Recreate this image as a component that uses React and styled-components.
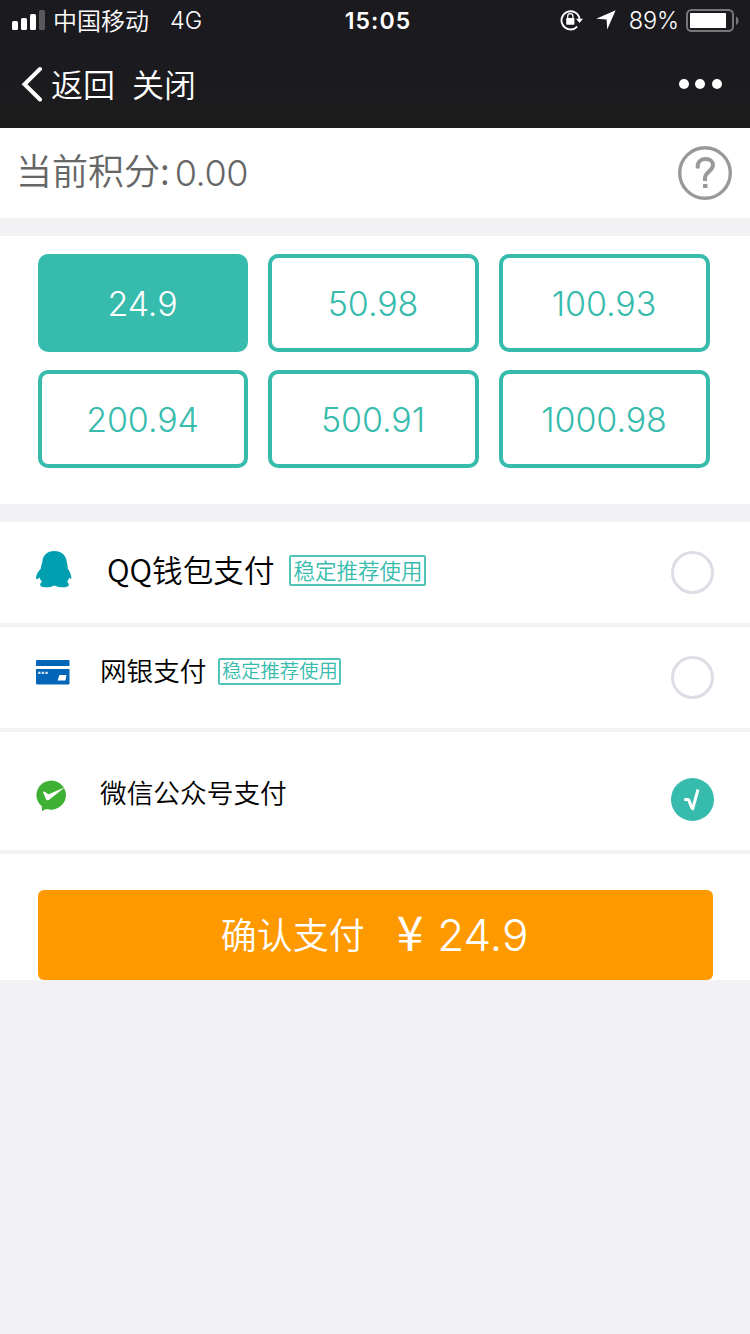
import React, { useState } from "react";
import styled, { createGlobalStyle } from "styled-components";

const amounts = ["24.9", "50.98", "100.93", "200.94", "500.91", "1000.98"];

const App = () => {
  const [amount, setAmount] = useState("24.9");
  const [method, setMethod] = useState("wechat");

  return (
    <Container>
      <GlobalStyle />
      <StatusBar>
        <StatusLeft>
          <Signal />
          <Carrier>中国移动</Carrier>
          <Network>4G</Network>
        </StatusLeft>
        <Time>15:05</Time>
        <StatusRight>
          <LockIcon />
          <LocationIcon />
          <Percent>89%</Percent>
          <BatteryIcon />
        </StatusRight>
      </StatusBar>
      <NavBar>
        <NavLeft>
          <BackIcon />
          <NavText>返回</NavText>
          <NavText>关闭</NavText>
        </NavLeft>
        <MoreIcon />
      </NavBar>

      <Credits>
        <CreditsLabel>当前积分:</CreditsLabel>
        <CreditsValue>0.00</CreditsValue>
        <HelpIcon />
      </Credits>

      <Amounts>
        {amounts.map((item) => (
          <Amount key={item} $active={item === amount} onClick={() => setAmount(item)}>
            {item}
          </Amount>
        ))}
      </Amounts>

      <Methods>
        <Method onClick={() => setMethod("qq")}>
          <IconBox $top={29}><QQIcon /></IconBox>
          <MethodName $left={35} $top={23} $size={30.6}>QQ钱包支付</MethodName>
          <Tag $left={15} $top={33} $width={137} $height={31} $size={21.5}>稳定推荐使用</Tag>
          <Radio $top={29} $checked={method === "qq"}>{method === "qq" && <CheckIcon />}</Radio>
        </Method>
        <Method onClick={() => setMethod("bank")}>
          <IconBox $top={33}><BankIcon /></IconBox>
          <MethodName $left={28} $top={19} $size={26.6}>网银支付</MethodName>
          <Tag $left={12} $top={31} $width={123} $height={27} $size={19.3}>稳定推荐使用</Tag>
          <Radio $top={29} $checked={method === "bank"}>{method === "bank" && <CheckIcon />}</Radio>
        </Method>
        <Method $tall onClick={() => setMethod("wechat")}>
          <IconBox $top={48}><WechatIcon /></IconBox>
          <MethodName $left={28} $top={36} $size={26.7}>微信公众号支付</MethodName>
          <Radio $top={46} $checked={method === "wechat"}>{method === "wechat" && <CheckIcon />}</Radio>
        </Method>
      </Methods>

      <Footer>
        <PayButton>
          <PayLabel>确认支付</PayLabel>
          <Yen>¥</Yen>
          <PayAmount>{amount}</PayAmount>
        </PayButton>
      </Footer>
    </Container>
  );
};

const Signal = () => (
  <svg width="33" height="20" viewBox="0 0 33 20" fill="#fff">
    <rect x="0" y="11" width="6" height="9" rx="1.5" />
    <rect x="9" y="8" width="6" height="12" rx="1.5" />
    <rect x="18" y="4" width="6" height="16" rx="1.5" />
    <rect x="27" y="0" width="6" height="20" rx="1.5" fill="#59595c" />
  </svg>
);

const LockIcon = () => (
  <svg width="24" height="22" viewBox="0 0 24 22" fill="none">
    <path d="M17.2 17.6A9.1 9.1 0 1 1 19.6 10" stroke="#fff" strokeWidth="1.9" />
    <path d="M16 9.8h7l-3.5 4.2z" fill="#fff" />
    <rect x="6.2" y="9" width="8.2" height="6.8" rx="0.8" fill="#fff" />
    <path d="M7.7 9.5V7.2a2.6 2.6 0 0 1 5.2 0v2.3" stroke="#fff" strokeWidth="1.3" />
  </svg>
);

const LocationIcon = () => (
  <svg width="20" height="20" viewBox="0 0 20 20">
    <path d="M19.6 0.3L11.2 19.6L10.6 9.4L0.3 8.7z" fill="#fff" />
  </svg>
);

const BatteryIcon = () => (
  <svg width="53" height="24" viewBox="0 0 53 24">
    <rect x="1" y="2" width="46" height="21" rx="4.5" fill="none" stroke="#77777a" strokeWidth="2" />
    <rect x="4" y="5" width="36" height="15" rx="0.6" fill="#fff" />
    <path d="M50 8.5c3.4 1.2 3.4 7.3 0 8.5z" fill="#77777a" />
  </svg>
);

const BackIcon = () => (
  <svg width="22" height="36" viewBox="0 0 22 36" fill="none">
    <path d="M19 3L3.5 18.2L19 33.5" stroke="#fff" strokeWidth="4" strokeLinecap="round" />
  </svg>
);

const MoreIcon = () => (
  <svg width="44" height="12" viewBox="0 0 44 12" fill="#fff">
    <circle cx="5" cy="6" r="5" />
    <circle cx="21" cy="6" r="5" />
    <circle cx="38" cy="6" r="5" />
  </svg>
);

const HelpIcon = () => (
  <svg width="54" height="54" viewBox="0 0 54 54" fill="none" stroke="#999">
    <circle cx="27" cy="27" r="25.3" strokeWidth="3.4" />
    <path d="M19.7 22.5V20.5C19.7 15.5 23 13 27.6 13C32.2 13 35 15.7 35 19C35 25 27 26 27 32V35" strokeWidth="4" />
    <rect x="25" y="38" width="4.5" height="4" fill="#999" stroke="none" />
  </svg>
);

const QQIcon = () => (
  <svg width="36" height="37" viewBox="0 0 36 37">
    <path
      d="M18.3 0C11.2 0 6.6 4.500 6.3 11C6.1 13 4.800 14.500 4.900 17.500C2.200 20.200 0 23.500 0 27C0.100 28.600 1 28.600 2 27.700L3.600 26.500C4.200 28.500 4.900 29.800 6 31C4.100 31.800 3.700 33.500 4.600 34.900C6 36.600 14 36.700 16.500 35.200C17.800 34.600 19.200 34.600 20.500 35.200C23 36.700 31 36.600 32.400 34.900C33.300 33.500 32.900 31.800 31 31C32.100 29.800 32.600 28.500 33 26.500L34 27.500C34.900 28.400 35.400 27.800 35.300 26.300C35 22.800 33.300 19.800 31.700 17.500C32 14.500 31 13 30.800 11C30.400 4.500 25.400 0 18.300 0Z"
      fill="#029fb1"
    />
  </svg>
);

const BankIcon = () => (
  <svg width="34" height="26" viewBox="0 0 34 26" fill="#0266b8">
    <path d="M1.5 0H32.5Q33.5 0 33.5 1V6H0V1Q0 0 1.5 0Z" />
    <path d="M0 9H33.5V23.5Q33.5 24.5 32.5 24.5H1.5Q0 24.5 0 23.5Z" />
    <path d="M23.5 15H30.500L29.500 20.500H21.500Z" fill="#fff" />
    <path d="M2.2 11.8h2.3v2.2h-2.3zM5.8 11.8h2.3v2.2h-2.3zM9.4 11.8h2.3v2.2h-2.3z" fill="#dcebf6" />
  </svg>
);

const WechatIcon = () => (
  <svg width="32" height="32" viewBox="0 0 32 32">
    <path d="M15.5 0.5A15 14.6 0 1 1 11.5 29.3Q8.5 29 6 31.2L5.8 26.3A15 14.6 0 0 1 15.5 0.5Z" fill="#3eb135" />
    <path d="M7 12.2Q7.500 10.900 8.700 11.700L12.600 14.300L29 7.200L12.800 19.900Q11.200 21 10.200 19.400Z" fill="#fff" />
  </svg>
);

const CheckIcon = () => (
  <svg width="43" height="43" viewBox="0 0 43 43" fill="none" stroke="#fff" strokeLinejoin="bevel">
    <path d="M13.3 21.500H17.500L21.200 30.500" strokeWidth="3.200" />
    <path d="M21.300 32L27 11.500" strokeWidth="3" />
  </svg>
);

const GlobalStyle = createGlobalStyle`
  * {
    box-sizing: border-box;
  }
  body {
    margin: 0;
    background: #f2f2f5;
    font-family: Inter, "Noto Sans CJK SC", sans-serif;
  }
`;

const Container = styled.div`
  width: 750px;
  min-height: 1334px;
  background: #f2f2f5;
`;

const StatusBar = styled.div`
  height: 40px;
  display: grid;
  grid-template-columns: 1fr auto 1fr;
  align-items: center;
  padding: 0 11px 0 12px;
  background: #1b1a1f;
  color: #fff;
  font-size: 24px;
  line-height: 38px;
`;

const StatusLeft = styled.div`
  display: flex;
  align-items: center;
`;

const StatusRight = styled.div`
  display: flex;
  align-items: center;
  justify-content: flex-end;

  > svg:nth-child(2) {
    margin-left: 12px;
  }
`;

const Carrier = styled.span`
  margin-left: 8px;
  font-family: "Noto Sans CJK SC", sans-serif;
  font-weight: 350;
`;

const Network = styled.span`
  margin-left: 21px;
  padding-top: 2px;
  font-size: 23.5px;
  font-weight: 350;
`;

const Time = styled.span`
  padding: 2px 0 0 5px;
  font-weight: 600;
  font-size: 23px;
  letter-spacing: 1.1px;
`;

const Percent = styled.span`
  margin: 0 7px 0 13px;
  padding-top: 2px;
  font-size: 23.5px;
  font-weight: 350;
  letter-spacing: -0.1px;
`;

const NavBar = styled.div`
  height: 88px;
  display: flex;
  align-items: center;
  justify-content: space-between;
  padding: 0 27px 0 21px;
  background: linear-gradient(#1b1a1f, #1c1c1d);
  color: #fff;
`;

const NavLeft = styled.div`
  display: flex;
  align-items: center;
`;

const NavText = styled.span`
  margin-left: 8px;
  padding-bottom: 2px;
  font-family: "Noto Sans CJK SC", sans-serif;
  font-size: 32px;
  line-height: 44px;
  font-weight: 350;

  & + & {
    margin-left: 17px;
  }
`;

const Credits = styled.div`
  height: 90px;
  display: flex;
  align-items: center;
  padding: 0 18px 0 16px;
  background: #fff;
  color: #666;

  > svg {
    margin-left: auto;
  }
`;

const CreditsLabel = styled.span`
  padding-bottom: 8px;
  font-family: "Noto Sans CJK SC", sans-serif;
  font-size: 36px;
  line-height: 50px;
  font-weight: 350;
`;

const CreditsValue = styled.span`
  margin-left: 5px;
  font-size: 36px;
  font-weight: 300;
  letter-spacing: -0.4px;
`;

const Amounts = styled.div`
  height: 268px;
  margin-top: 18px;
  padding: 18px 40px 36px 38px;
  display: grid;
  grid-template-columns: 210px 211px 211px;
  grid-auto-rows: 98px;
  gap: 18px 20px;
  background: #fff;
`;

const Amount = styled.button`
  border: 4px solid #36bbad;
  border-radius: 10px;
  background: ${({ $active }) => ($active ? "#36bbad" : "#fff")};
  color: ${({ $active }) => ($active ? "#fff" : "#36bbad")};
  font-family: Inter, sans-serif;
  font-size: 34px;
  font-weight: 300;
  letter-spacing: -0.1px;
  padding: 1px 1px 0 0;
`;

const Methods = styled.div`
  margin-top: 18px;
`;

const Method = styled.div`
  height: ${({ $tall }) => ($tall ? "122px" : "105px")};
  display: flex;
  align-items: flex-start;
  padding: 0 36px;
  background: #fff;
  border-bottom: 4px solid #f2f2f5;
`;

const IconBox = styled.div`
  width: 36px;
  flex-shrink: 0;
  margin-top: ${({ $top }) => $top}px;

  > svg {
    display: block;
  }
`;

const MethodName = styled.span`
  margin: ${({ $top }) => $top}px 0 0 ${({ $left }) => $left}px;
  font-family: "Noto Sans CJK SC", sans-serif;
  font-size: ${({ $size }) => $size}px;
  line-height: 48px;
  font-weight: 350;
  color: #000;
  white-space: nowrap;
`;

const Tag = styled.span`
  width: ${({ $width }) => $width}px;
  height: ${({ $height }) => $height}px;
  margin: ${({ $top }) => $top}px 0 0 ${({ $left }) => $left}px;
  padding-bottom: 1px;
  display: flex;
  align-items: center;
  justify-content: center;
  border: 2px solid #4fc4b7;
  border-radius: 2px;
  color: #36bbad;
  font-family: "Noto Sans CJK SC", sans-serif;
  font-size: ${({ $size }) => $size}px;
  font-weight: 350;
  line-height: 1;
  white-space: nowrap;
`;

const Radio = styled.div`
  width: 43px;
  height: 43px;
  flex-shrink: 0;
  margin: ${({ $top }) => $top}px 0 0 auto;
  border-radius: 50%;
  border: ${({ $checked }) => ($checked ? "none" : "3px solid #dddde5")};
  background: ${({ $checked }) => ($checked ? "#36bbad" : "#fff")};
`;

const Footer = styled.div`
  height: 126px;
  padding: 36px 37px 0 38px;
  background: #fff;
`;

const PayButton = styled.button`
  width: 100%;
  height: 90px;
  display: flex;
  align-items: center;
  justify-content: center;
  border: none;
  border-radius: 6px;
  padding: 0 2px 0 0;
  background: #ff9900;
  color: #fff;
`;

const PayLabel = styled.span`
  padding-bottom: 4px;
  font-family: "Noto Sans CJK SC", sans-serif;
  font-size: 36px;
  line-height: 50px;
  font-weight: 350;
`;

const Yen = styled.span`
  margin-left: 32px;
  padding-bottom: 10px;
  font-family: "Noto Sans CJK SC", sans-serif;
  font-size: 48px;
  line-height: 50px;
`;

const PayAmount = styled.span`
  margin-left: 14px;
  font-family: Inter, sans-serif;
  font-size: 44px;
  font-weight: 300;
`;

export default App;
